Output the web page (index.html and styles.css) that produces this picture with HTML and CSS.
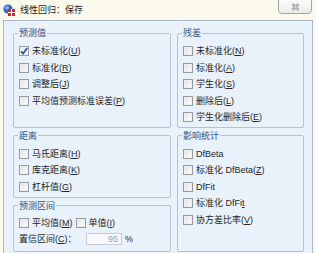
FILE: index.html
```html
<!DOCTYPE html>
<html lang="zh-CN">
<head>
<meta charset="utf-8">
<title>线性回归：保存</title>
<link rel="stylesheet" href="styles.css">
</head>
<body>
<div class="window">
  <div class="titlebar">
    <svg class="app-icon" viewBox="0 0 12 12" width="12" height="12">
      <circle cx="5" cy="5" r="4.6" fill="#2f6bc4"/>
      <circle cx="4" cy="3.8" r="2" fill="#7fb0ee"/>
      <rect x="5" y="5" width="7" height="7" fill="#d3262e"/>
      <path d="M5 8.5H12M8.5 5V12" stroke="#fff" stroke-width="1"/>
    </svg>
    <span class="title">线性回归：保存</span>
    <div class="close">
      <svg viewBox="0 0 9 8" width="9" height="8">
        <path d="M1.5 1.2L7.5 6.8M7.5 1.2L1.5 6.8" stroke="#8c9096" stroke-width="2.4" fill="none"/>
        <path d="M1.5 1.2L7.5 6.8M7.5 1.2L1.5 6.8" stroke="#f4f4f4" stroke-width="0.9" fill="none"/>
      </svg>
    </div>
  </div>
  <div class="main">
    <div class="grid">
      <fieldset class="group">
        <legend>预测值</legend>
        <div class="row"><span class="cb checked"><svg viewBox="0 0 8 8" width="8" height="8"><path d="M1 4.2L3.1 6.6L7.2 1" stroke="#2a4ea6" stroke-width="1.7" fill="none"/></svg></span><span>未标准化(<u>U</u>)</span></div>
        <div class="row"><span class="cb"></span><span>标准化(<u>R</u>)</span></div>
        <div class="row"><span class="cb"></span><span>调整后(<u>J</u>)</span></div>
        <div class="row"><span class="cb"></span><span>平均值预测标准误差(<u>P</u>)</span></div>
      </fieldset>
      <fieldset class="group">
        <legend>残差</legend>
        <div class="row"><span class="cb"></span><span>未标准化(<u>N</u>)</span></div>
        <div class="row"><span class="cb"></span><span>标准化(<u>A</u>)</span></div>
        <div class="row"><span class="cb"></span><span>学生化(<u>S</u>)</span></div>
        <div class="row"><span class="cb"></span><span>删除后(<u>L</u>)</span></div>
        <div class="row"><span class="cb"></span><span>学生化删除后(<u>E</u>)</span></div>
      </fieldset>
      <div class="stack">
        <fieldset class="group dist">
          <legend>距离</legend>
          <div class="row"><span class="cb"></span><span>马氏距离(<u>H</u>)</span></div>
          <div class="row"><span class="cb"></span><span>库克距离(<u>K</u>)</span></div>
          <div class="row"><span class="cb"></span><span>杠杆值(<u>G</u>)</span></div>
        </fieldset>
        <fieldset class="group interval">
          <legend>预测区间</legend>
          <div class="row short"><span class="cb"></span><span>平均值(<u>M</u>)</span><span class="cb second"></span><span>单值(<u>I</u>)</span></div>
          <div class="row short"><span class="conf-label">置信区间(<u>C</u>)：</span><span class="num-input">95</span><span class="pct">%</span></div>
        </fieldset>
      </div>
      <fieldset class="group influence">
        <legend>影响统计</legend>
        <div class="row"><span class="cb"></span><span>DfBeta</span></div>
        <div class="row"><span class="cb"></span><span>标准化 DfBeta(<u>Z</u>)</span></div>
        <div class="row"><span class="cb"></span><span>DfFit</span></div>
        <div class="row"><span class="cb"></span><span>标准化 DfFi<u>t</u></span></div>
        <div class="row"><span class="cb"></span><span>协方差比率(<u>V</u>)</span></div>
      </fieldset>
    </div>
  </div>
</div>
</body>
</html>
```

FILE: styles.css
```css
html, body {
  margin: 0;
  padding: 0;
  overflow: hidden;
}

body {
  width: 316px;
  height: 253px;
  background: #fbf9ec;
  font-family: "Liberation Sans", "Noto Sans CJK SC", sans-serif;
  font-size: 9px;
  color: #262626;
}

.window {
  width: 316px;
}

.titlebar {
  height: 20px;
  display: flex;
  align-items: center;
  padding-left: 3px;
}

.app-icon {
  margin-right: 5px;
  flex: none;
}

.title {
  line-height: 12px;
  color: #1a1a1a;
}

.close {
  margin-left: auto;
  margin-right: 4px;
  align-self: flex-start;
  margin-top: -1px;
  width: 32px;
  height: 13px;
  border: 1px solid #a2a6ac;
  border-radius: 0 0 4px 4px;
  background: linear-gradient(#fcfcfa, #ebebe6);
  display: flex;
  align-items: center;
  justify-content: center;
}

.main {
  margin: 0 3px;
  border: 1px solid #a9b8c8;
  background: #e9f1fb;
  padding: 6px 8px 10px 9px;
}

.grid {
  display: grid;
  grid-template-columns: 158px 127px;
  column-gap: 6px;
  row-gap: 2px;
}

.group {
  margin: 0;
  min-width: 0;
  border: 1px solid #b4c3d3;
  border-radius: 2px;
  padding: 4px 2px 1px 4px;
}

.group legend {
  padding: 0 1px;
  line-height: 12px;
  color: #34507a;
}

.stack {
  display: flex;
  flex-direction: column;
  gap: 1.5px;
}

.dist {
  padding-bottom: 2px;
}

.interval {
  flex: 1;
}

.influence {
  padding-bottom: 23px;
}

.row {
  display: flex;
  align-items: center;
  height: 16.5px;
  padding-left: 1px;
  line-height: 12px;
  white-space: nowrap;
}

.row.short {
  height: 15.5px;
}

.cb {
  box-sizing: border-box;
  width: 10px;
  height: 10px;
  flex: none;
  border: 1px solid #959aa0;
  background: linear-gradient(135deg, #dcdde0, #f7f7f7 70%, #ffffff);
  box-shadow: inset 0 0 0 1px #eef0f2;
  margin-right: 3px;
  display: flex;
  align-items: center;
  justify-content: center;
}

.cb.checked {
  background: linear-gradient(135deg, #e4e6ea, #ffffff);
}

.cb.second {
  margin-left: 3px;
}

u {
  text-decoration: underline;
  text-underline-offset: 1px;
}

.conf-label {
  width: 67px;
  flex: none;
}

.num-input {
  box-sizing: border-box;
  width: 36px;
  height: 12px;
  border: 1px solid #c4ccd6;
  background: #f6f8fb;
  color: #9ba3ad;
  text-align: right;
  padding-right: 3px;
  line-height: 10px;
}

.pct {
  margin-left: 3px;
}
```
